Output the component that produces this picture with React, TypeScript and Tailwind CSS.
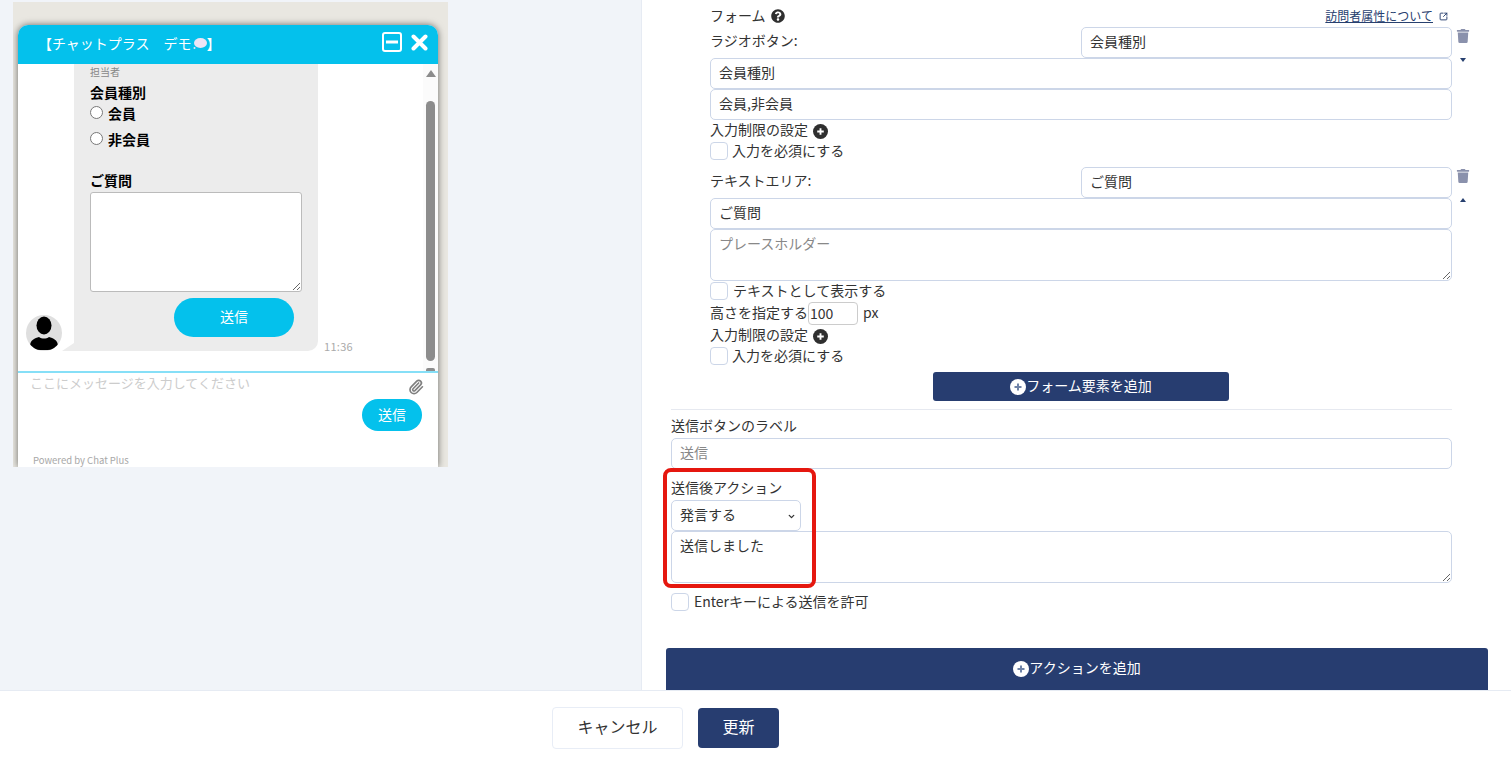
import React from "react";
import { FaQuestionCircle, FaTrash } from "react-icons/fa";
import { ChevronDown, Paperclip, SquareArrowOutUpRight } from "lucide-react";

const inputClass =
  "block w-full h-[31px] rounded-[5px] border border-[#ccd6e8] bg-white px-2 pb-[3px] text-[14px] text-[#333] outline-none placeholder:text-[#888]";
const areaClass =
  "block w-full h-[52px] rounded-[5px] border border-[#ccd6e8] bg-white px-2 pt-[3px] text-[14px] text-[#333] outline-none placeholder:text-[#888]";

const PlusDot = ({ size, bg, fg }: { size: number; bg: string; fg: string }) => (
  <svg width={size} height={size} viewBox="0 0 16 16" className="shrink-0">
    <circle cx="8" cy="8" r="8" fill={bg} />
    <path d="M8 4.5v7M4.5 8h7" stroke={fg} strokeWidth="2" />
  </svg>
);

const Check = ({ label, gap = "gap-1" }: { label: string; gap?: string }) => (
  <label className={`flex h-5 items-center ${gap} text-[14px] text-[#333]`}>
    <span className="h-[18px] w-[18px] rounded-[4px] border border-[#ccd6e8] bg-white" />
    <span className="pb-[2px]">{label}</span>
  </label>
);

const Limit = () => (
  <div className="flex h-5 items-center gap-[5px] text-[14px] text-[#333]">
    <span className="pb-[3px]">入力制限の設定</span>
    <PlusDot size={15} bg="#2f2f2f" fg="#fff" />
  </div>
);

const AddButton = ({ label, className }: { label: string; className: string }) => (
  <button className={`flex items-center justify-center rounded-[3px] bg-[#273d70] text-[14px] text-white ${className}`}>
    <PlusDot size={16} bg="#fff" fg="#6f83a8" />
    <span className="pb-[3px]">{label}</span>
  </button>
);

const Side = ({ caret }: { caret: "up" | "down" }) => (
  <div className="absolute left-[747px] top-0 flex w-3 flex-col items-center">
    <FaTrash className="mt-[2px] text-[14px] text-[#8a91ac]" />
    <svg width="6" height="4" viewBox="0 0 6 4" className="mt-[15px] text-[#27406f]">
      <polygon points={caret === "down" ? "0,0 6,0 3,4" : "0,4 6,4 3,0"} fill="currentColor" />
    </svg>
  </div>
);

const Avatar = () => (
  <div className="absolute bottom-[20px] left-2 h-9 w-9 overflow-hidden rounded-full bg-[#dfdfdf]">
    <svg viewBox="0 0 36 36" className="h-9 w-9">
      <ellipse cx="18" cy="10.5" rx="7.5" ry="9" fill="#000" />
      <path d="M4 31c0-6 5-8 9-9 3 2 7 2 10 0 4 1 9 3 9 9 0 3-3 4-14 4S4 34 4 31z" fill="#000" />
    </svg>
  </div>
);

const ChatWidget = () => (
  <div className="ml-[5px] mt-[23px] h-[442px] w-[420px] overflow-hidden rounded-t-[10px] bg-white shadow-[0_0_7px_rgba(0,0,0,0.55)]">
    <div className="flex h-[39px] items-center bg-[#04c1ec] pb-[5px] pl-5 pr-[10px] text-[14px] text-white">
      <span className="flex items-center pt-[2px]">
        【チャットプラス　デモ
        <svg width="14" height="13" viewBox="0 0 14 13" className="ml-[1px]">
          <ellipse cx="7.5" cy="6" rx="6.5" ry="5" fill="#eee4f5" />
          <circle cx="1.5" cy="11" r="1" fill="#eee4f5" />
        </svg>
        】
      </span>
      <svg width="20" height="20" viewBox="0 0 20 20" className="ml-auto">
        <rect x="1" y="1" width="18" height="18" rx="2" fill="none" stroke="#fff" strokeWidth="2" />
        <rect x="4" y="8.5" width="12" height="3" fill="#fff" />
      </svg>
      <svg width="17" height="17" viewBox="0 0 17 17" className="ml-[9px]">
        <path d="M2.5 2.5l12 12M14.5 2.5l-12 12" stroke="#fff" strokeWidth="4" strokeLinecap="round" />
      </svg>
    </div>

    <div className="relative h-[307px]">
      <div className="relative ml-[56px] h-[287px] w-[244px] rounded-br-[10px] bg-[#ececec] pl-4 text-[14px] font-bold text-black">
        <div className="flex h-4 items-center pb-[2px] text-[10px] font-normal text-[#888]">担当者</div>
        <div className="mt-1 flex h-[18px] items-center pb-[2px]">会員種別</div>
        <label className="mt-[2px] flex h-[18px] items-center gap-[5px]">
          <input type="radio" name="member" className="m-0 -mt-[2px] h-[13px] w-[13px]" />
          <span>会員</span>
        </label>
        <label className="mt-2 flex h-[18px] items-center gap-[5px]">
          <input type="radio" name="member" className="m-0 -mt-[2px] h-[13px] w-[13px]" />
          <span>非会員</span>
        </label>
        <div className="mt-6 flex h-[18px] items-center pb-[2px]">ご質問</div>
        <textarea className="mt-[2px] block h-[100px] w-[212px] rounded-[3px] border border-[#bbb] bg-white outline-none" />
        <button className="ml-[84px] mt-[6px] block h-[39px] w-[120px] rounded-full bg-[#04c1ec] pb-[2px] text-[14px] font-normal text-white">
          送信
        </button>
        <svg width="12" height="8" viewBox="0 0 12 8" className="absolute -left-3 bottom-0">
          <polygon points="0,8 12,0 12,8" fill="#ececec" />
        </svg>
        <span className="absolute -right-[35px] bottom-[-3px] text-[11px] font-normal tracking-[0.3px] text-[#aaa]">11:36</span>
      </div>
      <Avatar />

      <div className="absolute bottom-0 right-0 top-0 w-[15px] bg-[#fbfbfb]">
        <svg width="10" height="7" viewBox="0 0 10 7" className="absolute left-[3px] top-[6px]">
          <polygon points="0,7 10,7 5,0" fill="#8c8c8c" />
        </svg>
        <div className="absolute left-[3px] top-[37px] h-[260px] w-[9px] rounded-[5px] bg-[#8c8c8c]" />
        <div className="absolute bottom-0 left-[3px] h-[3px] w-[9px] rounded-t-[2px] bg-[#8c8c8c]" />
      </div>
    </div>

    <div className="relative border-t-2 border-[#86dff7] pl-3">
      <div className="flex h-[20px] items-center text-[13px] text-[#ccc]">ここにメッセージを入力してください</div>
      <Paperclip size={16} strokeWidth={2.5} className="absolute right-[14px] top-[6px] text-[#808080]" />
      <div className="mr-4 mt-[6px] flex justify-end">
        <button className="h-8 w-[60px] rounded-full bg-[#04c1ec] pb-[2px] text-[14px] text-white">送信</button>
      </div>
      <div className="mt-[23px] pl-[3px] text-[9.5px] leading-[12px] text-[#a8a8a8]">Powered by Chat Plus</div>
    </div>
  </div>
);

const App = () => {
  return (
    <div className="relative h-[764px] w-[1511px] overflow-hidden bg-white font-['Noto_Sans_CJK_JP','Liberation_Sans',sans-serif]">
      <div className="flex h-[690px]">
        <div className="h-full w-[642px] shrink-0 border-r border-[#e6ebf3] bg-[#f1f4f9] pl-[13px] pt-[2px]">
          <div className="h-[465px] w-[435px] overflow-hidden bg-[#e9e7e1]">
            <ChatWidget />
          </div>
        </div>

        <div className="min-w-0 flex-1 pt-[7px]">
          <div className="pl-[29px] pr-[59px]">
            <div className="pl-[39px]">
              <div className="flex h-5 items-center text-[14px] text-[#333]">
                <span className="pb-[4px]">フォーム</span>
                <FaQuestionCircle className="mb-[2px] ml-[5px] text-[14px] text-[#2f2f2f]" />
                <a className="ml-auto pb-[2px] text-[12px] text-[#27406f] underline">訪問者属性について</a>
                <SquareArrowOutUpRight size={9} strokeWidth={2.5} className="mb-[2px] ml-[6px] mr-[4px] text-[#27406f]" />
              </div>

              <div className="relative">
                <Side caret="down" />
                <div className="flex h-[31px] items-start justify-between text-[14px] text-[#333]">
                  <span className="pt-[3px]">ラジオボタン:</span>
                  <input readOnly value="会員種別" className={`${inputClass} !w-[371px]`} />
                </div>
                <input readOnly value="会員種別" className={inputClass} />
                <input readOnly value="会員,非会員" className={inputClass} />
              </div>
              <div className="mt-[1px]"><Limit /></div>
              <Check label="入力を必須にする" />

              <div className="relative mt-[6px]">
                <Side caret="up" />
                <div className="flex h-[31px] items-start justify-between text-[14px] text-[#333]">
                  <span className="pt-[3px]">テキストエリア:</span>
                  <input readOnly value="ご質問" className={`${inputClass} !w-[371px]`} />
                </div>
                <input readOnly value="ご質問" className={inputClass} />
                <textarea placeholder="プレースホルダー" className={areaClass} />
              </div>
              <Check label="テキストとして表示する" gap="gap-[5px]" />
              <div className="flex h-[25px] items-center text-[14px] text-[#333]">
                <span className="pb-[3px]">高さを指定する</span>
                <input readOnly value="100" className="h-[23px] w-[50px] rounded-[4px] border border-[#ccc] px-[1px] pb-[2px] text-[14px] text-[#333] outline-none" />
                <span className="ml-[5px] pb-[2px]">px</span>
              </div>
              <Limit />
              <Check label="入力を必須にする" />
              <AddButton label="フォーム要素を追加" className="ml-[223px] mt-[6px] h-[29px] w-[296px]" />
            </div>

            <div className="mt-[8px] h-px bg-[#e6e9f0]" />
            <div className="mt-[7px] flex h-5 items-center pb-[3px] text-[14px] text-[#333]">送信ボタンのラベル</div>
            <input placeholder="送信" className={`${inputClass} mt-px`} />
            <div className="mt-[10px] flex h-5 items-center pb-[3px] text-[14px] text-[#333]">送信後アクション</div>
            <div className="relative mt-px h-[31px] w-[130px]">
              <select className="block h-[31px] w-full appearance-none rounded-[5px] border border-[#ccd6e8] bg-white px-2 pb-[2px] text-[14px] text-[#333] outline-none">
                <option>発言する</option>
              </select>
              <ChevronDown size={9} strokeWidth={3.5} className="absolute right-[5px] top-[12px] text-[#333]" />
            </div>
            <textarea readOnly value="送信しました" className={areaClass} />
            <div className="mt-[9px]"><Check label="Enterキーによる送信を許可" gap="gap-[5px]" /></div>
          </div>
          <AddButton label="アクションを追加" className="ml-[24px] mt-[36px] h-[42px] w-[822px] !rounded-b-none" />
        </div>
      </div>

      <div className="flex h-[74px] items-center justify-center gap-[15px] border-t border-[#e6ebf3] pr-[180px] text-[16px]">
        <button className="h-[42px] w-[131px] rounded-[4px] border border-[#e8edf6] bg-white pb-[3px] text-[#333]">キャンセル</button>
        <button className="h-10 w-[81px] rounded-[4px] bg-[#273d70] pb-[3px] text-white">更新</button>
      </div>

      <div className="absolute left-[663px] top-[468px] h-[120px] w-[153px] rounded-[8px] border-4 border-[#e5170f]" />
    </div>
  );
};

export default App;
